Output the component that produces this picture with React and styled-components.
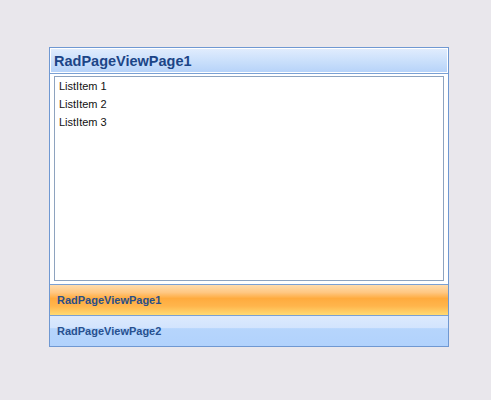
import React from "react";
import styled, { createGlobalStyle } from "styled-components";

const Global = createGlobalStyle`
  html, body { margin: 0; padding: 0; background: #e9e7ec; }
  body { width: 491px; height: 400px; overflow: hidden; }
`;

const Page = styled.div`
  padding: 47px 0 0 49px;
`;

const View = styled.div`
  width: 398px;
  border: 1px solid #6f98d2;
  background: #fff;
  display: flex;
  flex-direction: column;
`;

const Header = styled.div`
  height: 23px;
  border: 1px solid #fff;
  background: linear-gradient(to bottom, #e0ecfd 0%, #c9dffb 55%, #b7d3f9 100%);
  display: flex;
  align-items: center;
  padding-left: 3px;
  font-family: "Liberation Sans", Arial, sans-serif;
  font-weight: bold;
  font-size: 14.5px;
  color: #1c4587;
`;

const HeaderLine = styled.div`
  height: 1px;
  background: #7aa0d4;
`;

const Content = styled.div`
  height: 210px;
  padding: 2px 4px 3px 4px;
  box-sizing: border-box;
  display: flex;
`;

const ListBox = styled.div`
  flex: 1;
  border: 1px solid #8ea3bf;
  padding: 0 0 0 4px;
  display: flex;
  flex-direction: column;
`;

const Item = styled.div`
  height: 18px;
  line-height: 18px;
  font-family: "Liberation Sans", Arial, sans-serif;
  font-size: 11px;
  color: #111;
`;

const Tab = styled.div`
  height: 30px;
  border-top: 1px solid #7aa0d4;
  display: flex;
  align-items: center;
  padding-left: 7px;
  font-family: "Liberation Sans", Arial, sans-serif;
  font-weight: bold;
  font-size: 11px;
  color: ${(p) => (p.$active ? "#2b4f88" : "#27508f")};
  background: ${(p) =>
    p.$active
      ? "linear-gradient(to bottom, #ffdcad 0%, #ffc781 25%, #ffab3e 45%, #ffb54c 70%, #ffda73 100%)"
      : "linear-gradient(to bottom, #dceafd 0%, #d2e4fd 40%, #b6d5fc 42%, #b1d2fc 100%)"};
`;

export default function App() {
  return (
    <>
      <Global />
      <Page>
        <View>
          <Header>RadPageViewPage1</Header>
          <HeaderLine />
          <Content>
            <ListBox>
              <Item>ListItem 1</Item>
              <Item>ListItem 2</Item>
              <Item>ListItem 3</Item>
            </ListBox>
          </Content>
          <Tab $active>RadPageViewPage1</Tab>
          <Tab>RadPageViewPage2</Tab>
        </View>
      </Page>
    </>
  );
}
